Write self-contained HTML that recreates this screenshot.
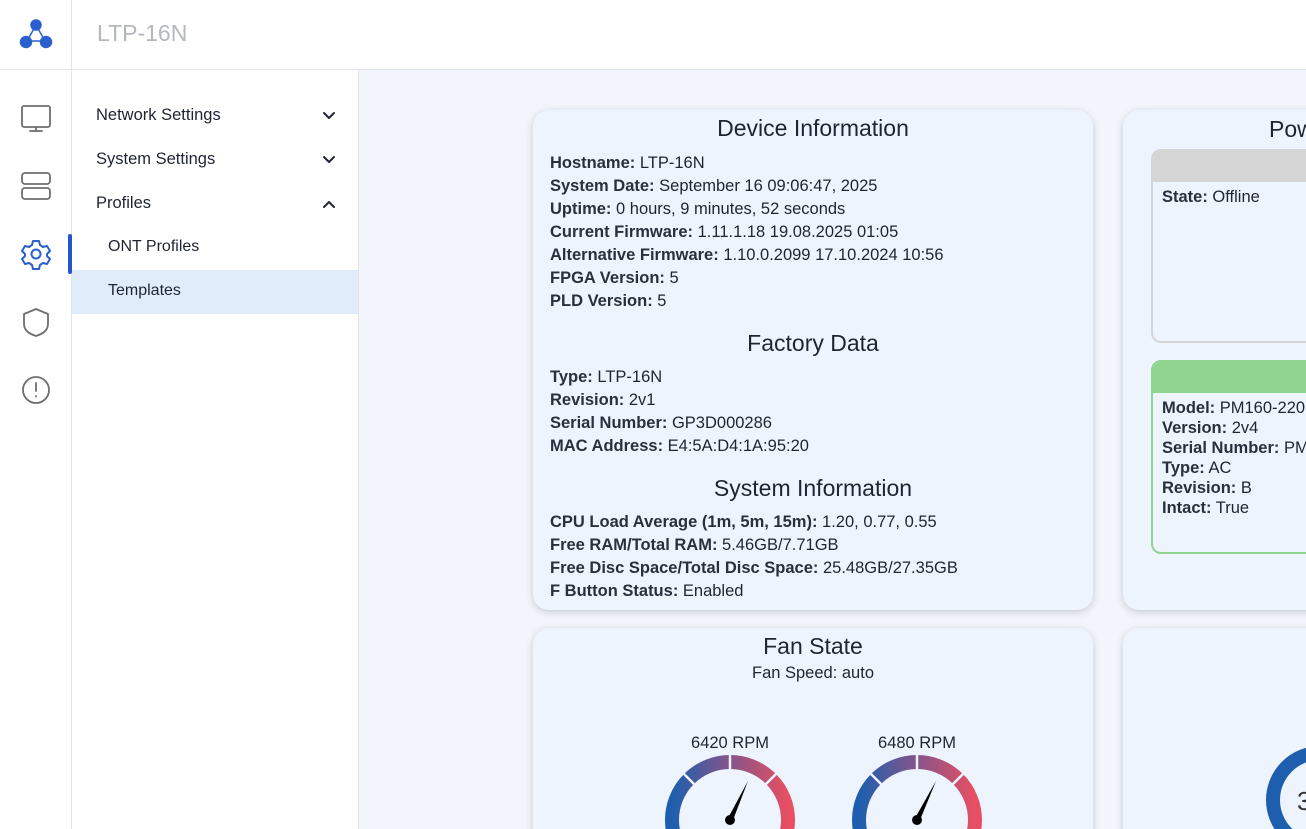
<!DOCTYPE html>
<html style="overflow:hidden;height:829px"><head><meta charset="utf-8"><style>
*{box-sizing:border-box;margin:0;padding:0}
body{width:1306px;height:829px;overflow:hidden;font-family:"Liberation Sans",sans-serif;background:#fff;color:#1f2433;position:relative}
.top{position:absolute;left:0;top:0;width:1306px;height:70px;border-bottom:1px solid #e2e4e8;background:#fff}
.rail{position:absolute;left:0;top:0;width:72px;height:829px;border-right:1px solid #e2e4e8}
.title{position:absolute;left:97px;top:20px;font-size:23px;color:#b4b7bd}
.side{position:absolute;left:72px;top:70px;width:287px;height:759px;border-right:1px solid #e2e4e8}
.mi{position:absolute;left:24px;font-size:16.5px;color:#1f2433}
.main{position:absolute;left:359px;top:70px;width:947px;height:759px;background:#f2f6fc;overflow:hidden}
.card{position:absolute;background:#edf4fe;border-radius:16px;box-shadow:0 2px 8px rgba(0,0,0,.18)}
.h{text-align:center;font-size:23px;color:#1f2433}
.l{font-size:16.5px;line-height:23px;padding-left:17px;white-space:nowrap}
.l b{font-weight:bold;color:#2a2f3d}
</style></head><body>
<div class="main">
 <div class="card" style="left:174px;top:40px;width:560px;height:500px">
  <div class="h" style="margin-top:5px">Device Information</div>
  <div class="l" style="margin-top:10px"><b>Hostname:</b> LTP-16N<br><b>System Date:</b> September 16 09:06:47, 2025<br><b>Uptime:</b> 0 hours, 9 minutes, 52 seconds<br><b>Current Firmware:</b> 1.11.1.18 19.08.2025 01:05<br><b>Alternative Firmware:</b> 1.10.0.2099 17.10.2024 10:56<br><b>FPGA Version:</b> 5<br><b>PLD Version:</b> 5</div>
  <div class="h" style="margin-top:17px">Factory Data</div>
  <div class="l" style="margin-top:9px"><b>Type:</b> LTP-16N<br><b>Revision:</b> 2v1<br><b>Serial Number:</b> GP3D000286<br><b>MAC Address:</b> E4:5A:D4:1A:95:20</div>
  <div class="h" style="margin-top:17px">System Information</div>
  <div class="l" style="margin-top:9px"><b>CPU Load Average (1m, 5m, 15m):</b> 1.20, 0.77, 0.55<br><b>Free RAM/Total RAM:</b> 5.46GB/7.71GB<br><b>Free Disc Space/Total Disc Space:</b> 25.48GB/27.35GB<br><b>F Button Status:</b> Enabled</div>
 </div>
 <div class="card" style="left:764px;top:40px;width:300px;height:500px;overflow:hidden">
  <div style="position:absolute;left:146px;top:6px;font-size:23px">Power</div>
  <div style="position:absolute;left:28px;top:39px;width:300px;height:194px;border:2px solid #d5d5d5;border-radius:10px;overflow:hidden">
   <div style="height:31px;background:#d5d5d5"></div>
   <div class="l" style="padding-left:9px;margin-top:4px"><b>State:</b> Offline</div></div>
  <div style="position:absolute;left:28px;top:250px;width:300px;height:194px;border:2px solid #8fd48f;border-radius:10px;overflow:hidden">
   <div style="height:31px;background:#8fd48f"></div>
   <div class="l" style="padding-left:9px;margin-top:5px;line-height:20px"><b>Model:</b> PM160-220<br><b>Version:</b> 2v4<br><b>Serial Number:</b> PM<br><b>Type:</b> AC<br><b>Revision:</b> B<br><b>Intact:</b> True</div></div>
 </div>
 <div class="card" style="left:174px;top:558px;width:560px;height:260px">
  <div class="h" style="margin-top:5px">Fan State</div>
  <div style="text-align:center;font-size:16.5px;margin-top:4px">Fan Speed: auto</div>
 </div>
 <div class="card" style="left:764px;top:558px;width:300px;height:260px"></div>
</div>
<svg style="position:absolute;left:0;top:0" width="1306" height="829">
 <defs><linearGradient id="g" x1="0" x2="1"><stop offset="0" stop-color="#1d5fae"/><stop offset=".5" stop-color="#85558a"/><stop offset="1" stop-color="#e84f62"/></linearGradient></defs>
 <g font-family="Liberation Sans" font-size="16.5" fill="#1f2433" text-anchor="middle">
 <text x="730" y="748">6420 RPM</text><text x="917" y="748">6480 RPM</text></g>
 <g fill="none" stroke="url(#g)" stroke-width="14">
  <circle cx="730" cy="820" r="58"/><circle cx="917" cy="820" r="58"/></g>
 <g stroke="#edf4fe" stroke-width="2.5">
  <line x1="730" y1="752" x2="730" y2="770"/><line x1="682" y1="772" x2="695" y2="785"/><line x1="778" y1="772" x2="765" y2="785"/>
  <line x1="917" y1="752" x2="917" y2="770"/><line x1="869" y1="772" x2="882" y2="785"/><line x1="965" y1="772" x2="952" y2="785"/></g>
 <g fill="#000"><circle cx="730" cy="820" r="5"/><polygon points="727,820 733,820 748,781"/><circle cx="917" cy="820" r="5"/><polygon points="914,820 920,820 936,781"/></g>
 <circle cx="1320" cy="800" r="47" fill="none" stroke="#1d5fae" stroke-width="14"/>
 <text x="1297" y="810" font-family="Liberation Sans" font-size="26" fill="#333">3</text>
</svg>
<div class="top"></div>
<div class="rail"></div>
<div class="title">LTP-16N</div>
<div class="side">
 <div class="mi" style="top:36px">Network Settings</div>
 <div class="mi" style="top:80px">System Settings</div>
 <div class="mi" style="top:124px">Profiles</div>
 <div class="mi" style="top:168px;left:36px;font-size:16px">ONT Profiles</div>
 <div style="position:absolute;left:0;top:200px;width:286px;height:44px;background:#e1ecfb"></div>
 <div class="mi" style="top:212px;left:36px;font-size:16px">Templates</div>
</div>
<div style="position:absolute;left:68px;top:234px;width:4px;height:40px;background:#2357c9;border-radius:2px"></div>
<svg style="position:absolute;left:0;top:0" width="360" height="420" fill="none" stroke-linecap="round" stroke-linejoin="round">
 <g fill="#2a5fce" stroke="#2a5fce" stroke-width="1.5"><line x1="36" y1="25" x2="27" y2="41"/><line x1="36" y1="25" x2="45" y2="41"/><line x1="27" y1="41" x2="45" y2="41"/>
 <circle cx="36" cy="25" r="5"/><circle cx="26" cy="42" r="5.5"/><circle cx="46" cy="42" r="5.5"/></g>
 <g stroke="#1f2433" stroke-width="2"><polyline points="324,113 329,118 334,113"/><polyline points="324,157 329,162 334,157"/><polyline points="324,207 329,202 334,207"/></g>
 <g stroke="#6e6e6e" stroke-width="1.8">
  <rect x="22" y="106" width="28" height="21" rx="2"/><line x1="36" y1="127" x2="36" y2="131"/><line x1="30" y1="131" x2="42" y2="131"/>
  <rect x="22" y="173" width="28" height="11" rx="3"/><rect x="22" y="188" width="28" height="11" rx="3"/>
  <path d="M36 309 L48 314 V324 C48 331 42 334 36 336 C30 334 24 331 24 324 V314 Z"/>
  <circle cx="36" cy="390" r="13"/><line x1="36" y1="383" x2="36" y2="391"/><line x1="36" y1="396" x2="36" y2="396.5"/></g>
 <g stroke="#2a5fce" stroke-width="2"><circle cx="36" cy="254" r="4.5"/>
  <path d="M33 241 h6 l1 4 l3 2 l4-1 l3 5 l-3 3 v2 l3 3 l-3 5 l-4-1 l-3 2 l-1 4 h-6 l-1-4 l-3-2 l-4 1 l-3-5 l3-3 v-2 l-3-3 l3-5 l4 1 l3-2 z"/></g>
</svg>
</body></html>
